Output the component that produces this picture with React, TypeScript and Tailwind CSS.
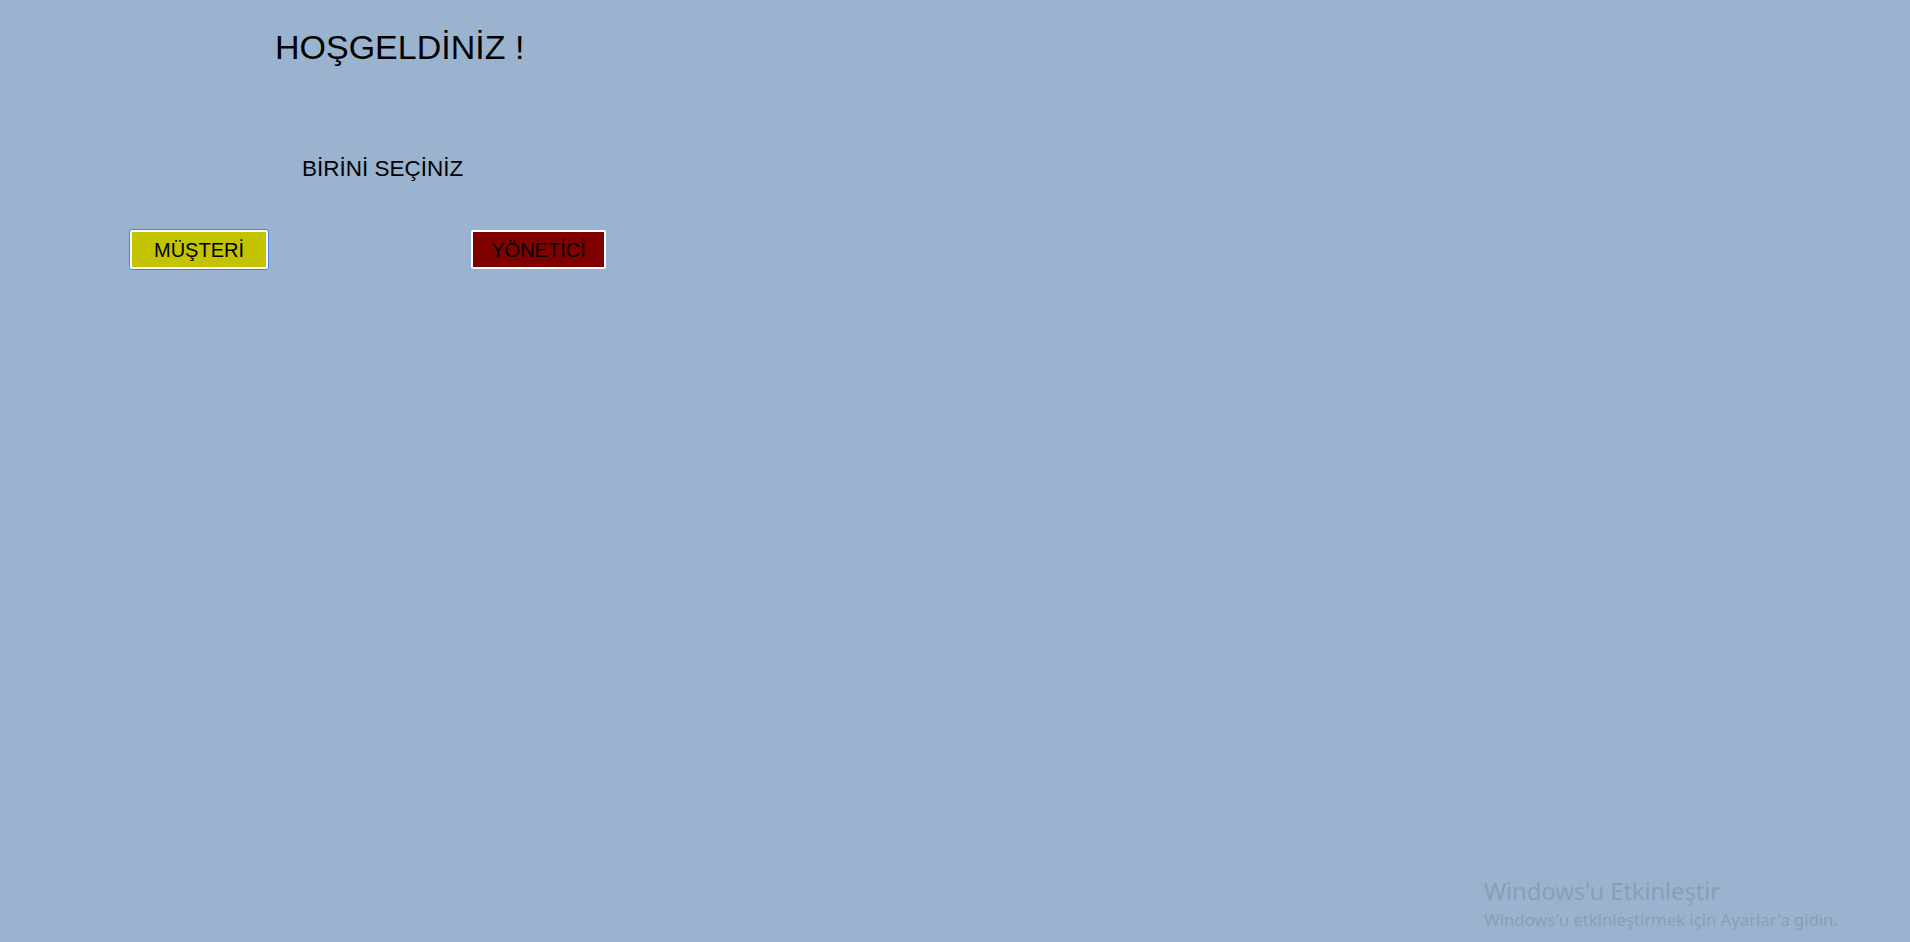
export default function App() {
  return (
    <div className="relative min-h-screen w-full overflow-hidden bg-[#9ab4d0] font-['Liberation_Sans',Arial,sans-serif] text-black">
      <div className="flex flex-col pt-[27px]">
        <h1 className="ml-[275px] text-[34px] leading-[40px] font-normal">HOŞGELDİNİZ !</h1>
        <p className="ml-[302px] mt-[89px] text-[22.5px] leading-[26px]">BİRİNİ SEÇİNİZ</p>
        <div className="mt-[47px] ml-[129px] flex items-start gap-[202px]">
          <button className="flex h-[41px] w-[140px] items-center justify-center rounded-[3px] border border-[#3d86d6] bg-white p-[2px]">
            <span className="flex h-full w-full items-center justify-center rounded-[1px] bg-[#c3c300] text-[20px] leading-none">
              MÜŞTERİ
            </span>
          </button>
          <button className="mt-[1px] flex h-[39px] w-[135px] items-center justify-center rounded-[2px] border-2 border-white bg-[#800000] text-[20px] leading-none">
            YÖNETİCİ
          </button>
        </div>
      </div>

      {/* Windows activation watermark */}
      <div className="pointer-events-none absolute left-[1484px] top-[874px] font-['Noto_Sans',sans-serif] text-[#8c9eb4]">
        <div className="text-[24px] leading-[34px] tracking-[-0.2px]">Windows'u Etkinleştir</div>
        <div className="text-[17px] leading-[24px] tracking-[-0.15px]">Windows'u etkinleştirmek için Ayarlar'a gidin.</div>
      </div>
    </div>
  );
}
